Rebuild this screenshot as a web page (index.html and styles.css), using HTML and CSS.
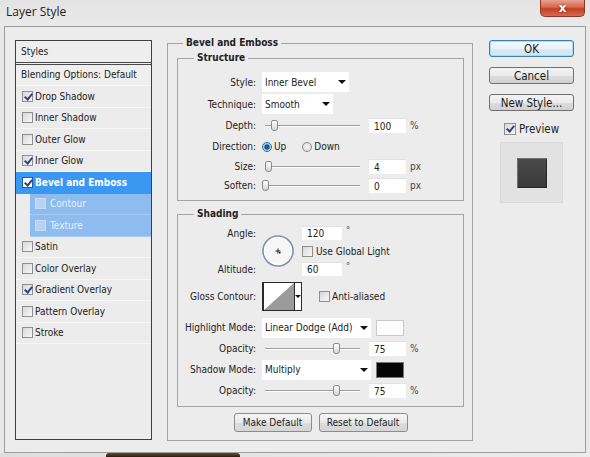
FILE: index.html
```html
<!DOCTYPE html>
<html lang="en">
  <head>
    <meta charset="UTF-8" />
    <meta name="viewport" content="width=device-width, initial-scale=1.0" />
    <title>Layer Style</title>
    <link rel="stylesheet" href="styles.css">
  </head>
  <body>
    <div class="titlebar">
      <span class="title">Layer Style</span>
      <button class="close" type="button">x</button>
    </div>

    <div class="dialog">
      <!-- effects list -->
      <div class="fx-list">
        <div class="fx-head">Styles</div>
        <div class="fx-blend">Blending Options: Default</div>
        <div class="fx"><span class="check on"></span>Drop Shadow</div>
        <div class="fx"><span class="check"></span>Inner Shadow</div>
        <div class="fx"><span class="check"></span>Outer Glow</div>
        <div class="fx"><span class="check on"></span>Inner Glow</div>
        <div class="fx sel"><span class="check on"></span>Bevel and Emboss</div>
        <div class="fx sub"><span class="check"></span>Contour</div>
        <div class="fx sub"><span class="check"></span>Texture</div>
        <div class="fx"><span class="check"></span>Satin</div>
        <div class="fx"><span class="check"></span>Color Overlay</div>
        <div class="fx"><span class="check on"></span>Gradient Overlay</div>
        <div class="fx"><span class="check"></span>Pattern Overlay</div>
        <div class="fx"><span class="check"></span>Stroke</div>
      </div>

      <!-- settings -->
      <fieldset class="group">
        <legend>Bevel and Emboss</legend>

        <fieldset class="sub structure">
          <legend>Structure</legend>
          <div class="row tall">
            <label>Style:</label>
            <div class="select w-style">Inner Bevel</div>
          </div>
          <div class="row tall">
            <label>Technique:</label>
            <div class="select w-tech">Smooth</div>
          </div>
          <div class="row">
            <label>Depth:</label>
            <span class="slider"><span class="thumb" style="left: 9px"></span></span>
            <input class="num" value="100" readonly>
            <span class="unit">%</span>
          </div>
          <div class="row">
            <label>Direction:</label>
            <span class="radio on"></span><span class="opt">Up</span>
            <span class="radio down"></span><span class="opt">Down</span>
          </div>
          <div class="row short">
            <label>Size:</label>
            <span class="slider"><span class="thumb" style="left: 3px"></span></span>
            <input class="num" value="4" readonly>
            <span class="unit">px</span>
          </div>
          <div class="row short">
            <label>Soften:</label>
            <span class="slider"><span class="thumb" style="left: 0px"></span></span>
            <input class="num" value="0" readonly>
            <span class="unit">px</span>
          </div>
        </fieldset>

        <fieldset class="sub shading">
          <legend>Shading</legend>
          <div class="angle">
            <label class="angle-lbl">Angle:</label>
            <svg class="dial" width="32" height="32" viewBox="0 0 32 32">
              <circle cx="16" cy="16" r="15" fill="#f6f6f6" stroke="#8790aa" stroke-width="1.6"/>
              <circle cx="16" cy="16" r="13.6" fill="none" stroke="#ffffff" stroke-width="1"/>
              <path d="M13.5 16h5M16 13.5v5" stroke="#222" stroke-width="1"/>
              <rect x="17" y="17" width="1.5" height="1.5" fill="#222"/>
            </svg>
            <div class="angle-val">
              <input class="num deg" value="120" readonly><span class="unit sup">°</span>
            </div>
            <div class="global"><span class="check"></span>Use Global Light</div>
            <label class="alt-lbl">Altitude:</label>
            <div class="angle-val alt-val">
              <input class="num deg" value="60" readonly><span class="unit sup">°</span>
            </div>
          </div>

          <div class="row contour-row">
            <label>Gloss Contour:</label>
            <div class="contour">
              <svg width="30" height="27" viewBox="0 0 30 27">
                <rect width="30" height="27" fill="#fff"/>
                <polygon points="0,27 30,0 30,27" fill="#9b9b9b"/>
              </svg>
              <span class="contour-arrow"></span>
            </div>
            <span class="check aa"></span><span>Anti-aliased</span>
          </div>

          <div class="row">
            <label>Highlight Mode:</label>
            <div class="select w-mode">Linear Dodge (Add)</div>
            <span class="swatch white"></span>
          </div>
          <div class="row">
            <label>Opacity:</label>
            <span class="slider"><span class="thumb" style="left: 71px"></span></span>
            <input class="num" value="75" readonly>
            <span class="unit">%</span>
          </div>
          <div class="row">
            <label>Shadow Mode:</label>
            <div class="select w-mode">Multiply</div>
            <span class="swatch black"></span>
          </div>
          <div class="row">
            <label>Opacity:</label>
            <span class="slider"><span class="thumb" style="left: 71px"></span></span>
            <input class="num" value="75" readonly>
            <span class="unit">%</span>
          </div>
        </fieldset>

        <div class="defaults">
          <button class="btn w-make" type="button">Make Default</button>
          <button class="btn w-reset" type="button">Reset to Default</button>
        </div>
      </fieldset>

      <!-- dialog buttons -->
      <div class="actions">
        <button class="big ok" type="button">OK</button>
        <button class="big" type="button">Cancel</button>
        <button class="big" type="button">New Style...</button>
        <div class="preview"><span class="check on big-check"></span>Preview</div>
        <div class="thumb-box"><span class="sample"></span></div>
      </div>
    </div>

    <div class="backdrop"><span class="blob"></span></div>
  </body>
</html>
```

FILE: styles.css
```css
* {
  box-sizing: border-box;
}
body {
  margin: 0;
  width: 590px;
  height: 457px;
  overflow: hidden;
  background-color: #e8e8e8;
  color: #222;
  font-family: "DejaVu Sans Condensed", "DejaVu Sans", sans-serif;
  font-stretch: condensed;
  font-size: 10px;
}

/* title bar */
.titlebar {
  display: flex;
  align-items: flex-start;
  height: 26px;
  background: linear-gradient(#e3e3e3, #eaeaea);
}
.title {
  padding-left: 6px;
  font-family: "Open Sans", sans-serif;
  font-stretch: normal;
  font-size: 12px;
  line-height: 24px;
  color: #1c1c1c;
}
.close {
  margin-left: auto;
  margin-right: 5px;
  width: 45px;
  height: 17px;
  padding: 0;
  border: 1px solid #8d3826;
  border-top: 0;
  border-radius: 0 0 5px 5px;
  background: linear-gradient(#e7a392, #d8674d 45%, #c53f24 55%, #d66a4e);
  color: #fff;
  font: bold 12px/14px "DejaVu Sans", sans-serif;
  text-shadow: 0 0 2px #5b1a0d;
}

.dialog {
  display: flex;
  align-items: flex-start;
  height: 427px;
  margin: 0 4px;
  padding: 10px 0 0 10px;
  border: 1px solid #9d9d9d;
  background-color: #ececec;
}

/* effects list */
.fx-list {
  width: 137px;
  height: 400px;
  margin-top: 3px;
  border: 1px solid #3f3f3f;
  background-color: #ececec;
}
.fx-head {
  height: 24px;
  padding-left: 5px;
  line-height: 21px;
  border-bottom: 3px double #4a4a4a;
  background-color: #eeeeee;
}
.fx-blend {
  height: 21px;
  padding-left: 5px;
  line-height: 20px;
  border-bottom: 1px solid #f8f8f8;
  background-color: #efefef;
}
.fx {
  display: flex;
  align-items: center;
  height: 21.5px;
  padding-left: 6px;
  border-bottom: 1px solid #f7f7f7;
}
.fx .check {
  margin-right: 2px;
}
.fx.sel {
  background-color: #3a97f2;
  color: #fff;
  font-weight: bold;
  border-bottom-color: #3a97f2;
}
.fx.sel .check {
  border-color: #1e5fa8;
  background: #fff;
}
.fx.sub {
  margin-left: 14px;
  padding-left: 5px;
  background-color: #8ebcef;
  color: #e6f0fc;
  border-bottom-color: #a7cbf3;
}
.fx.sub .check {
  margin-right: 4px;
  border-color: #c8dcf5;
  background: #b7d2f3;
}

/* checkbox */
.check {
  position: relative;
  flex: none;
  display: inline-block;
  width: 11px;
  height: 11px;
  border: 1px solid #8f8f8f;
  background: linear-gradient(135deg, #d9d9d9, #f7f7f7);
}
.check.on::after {
  content: "";
  position: absolute;
  left: 3px;
  top: 0;
  width: 3px;
  height: 6px;
  border: solid #2d428a;
  border-width: 0 2px 2px 0;
  transform: rotate(40deg);
}

/* group boxes */
fieldset {
  margin: 0;
  min-width: 0;
  border: 1px solid #a4a4a4;
}
legend {
  padding: 0 3px;
  font-weight: bold;
  line-height: 12px;
}
.group {
  width: 306px;
  margin-left: 15px;
  padding: 3px 8px 8px 9px;
}
.group > legend {
  margin-left: 6px;
}
.sub {
  padding: 0;
}
.sub > legend {
  margin-left: 16px;
}
.structure {
  padding: 7px 0 5px;
}
.shading {
  margin-top: 7px;
  padding: 6px 0 5px;
}

.row {
  display: flex;
  align-items: center;
  height: 21px;
}
.row.tall {
  height: 22px;
}
.row.short {
  height: 19px;
}
.row > label {
  flex: none;
  width: 84px;
  padding-right: 6px;
  text-align: right;
}

.select {
  display: flex;
  align-items: center;
  justify-content: space-between;
  height: 20px;
  padding: 0 3px 0 3px;
  background-color: #fff;
}
.select::after {
  content: "";
  border-left: 4px solid transparent;
  border-right: 4px solid transparent;
  border-top: 4px solid #111;
}
.w-style { width: 87px; }
.w-tech { width: 71px; }
.w-mode { width: 109px; }

.slider {
  position: relative;
  flex: none;
  width: 100px;
  height: 11px;
}
.slider::before {
  content: "";
  position: absolute;
  left: 3px;
  right: 2px;
  top: 5px;
  height: 1px;
  background-color: #9d9d9d;
  box-shadow: 0 1px 0 #fff;
}
.thumb {
  position: absolute;
  top: 0;
  width: 7px;
  height: 11px;
  border: 1px solid #8a8a8a;
  border-radius: 2px 2px 3px 3px;
  background: linear-gradient(#ffffff, #d6d6d6);
}

.num {
  width: 37px;
  height: 15px;
  margin-left: 7px;
  padding: 0 0 0 5px;
  border: 0;
  border-top: 1px solid #e2e2e2;
  background-color: #fff;
  color: #222;
  font: inherit;
  outline: none;
}
.unit {
  margin-left: 4px;
  color: #444;
}

.radio {
  flex: none;
  width: 10px;
  height: 10px;
  border-radius: 50%;
  border: 1px solid #8d8d8d;
  background: radial-gradient(circle, #f4f4f4, #d4d4d4);
}
.radio.on {
  border-color: #2d6a94;
  background: radial-gradient(circle, #1d5c86 0 2.3px, #8fc0e2 3px, #e4f1fa 4.5px);
}
.radio.down {
  margin-left: 16px;
}
.opt {
  margin-left: 2px;
}

/* angle + altitude */
.angle {
  display: grid;
  grid-template-columns: 84px 40px auto;
  grid-template-rows: 14px 22px 14px;
  align-items: center;
}
.angle-lbl,
.alt-lbl {
  grid-column: 1;
  padding-right: 6px;
  text-align: right;
}
.angle-lbl {
  grid-row: 1;
}
.alt-lbl {
  grid-row: 3;
}
.dial {
  grid-column: 2;
  grid-row: 1 / 4;
  align-self: center;
}
.angle-val {
  grid-column: 3;
  grid-row: 1;
  display: flex;
  align-items: flex-start;
  height: 14px;
}
.angle-val.alt-val {
  grid-row: 3;
}
.num.deg {
  width: 40px;
  height: 14px;
  margin-left: 0;
}
.sup {
  font-size: 9px;
  line-height: 9px;
}
.global {
  grid-column: 3;
  grid-row: 2;
  display: flex;
  align-items: center;
}
.global .check {
  margin-right: 3px;
}

.row.contour-row {
  height: 29px;
  margin: 6px 0;
}
.contour {
  display: flex;
  height: 29px;
  border: 1px solid #2a2a2a;
  border-left-width: 2px;
  background-color: #fff;
}
.contour-arrow {
  display: flex;
  align-items: center;
  justify-content: center;
  width: 7px;
  border-left: 1px solid #2a2a2a;
}
.contour-arrow::after {
  content: "";
  border-left: 3px solid transparent;
  border-right: 3px solid transparent;
  border-top: 3px solid #111;
}
.check.aa {
  margin-left: 17px;
  margin-right: 2px;
}

.swatch {
  width: 28px;
  height: 16px;
  margin-left: 5px;
  border: 1px solid #c9c9c9;
}
.swatch.white { background-color: #fdfdfd; }
.swatch.black { background-color: #050505; border-color: #777; }

.defaults {
  display: flex;
  justify-content: center;
  gap: 7px;
  margin-top: 6px;
}
.btn {
  height: 19px;
  padding: 0;
  border: 1px solid #8b8b8b;
  border-radius: 3px;
  background: linear-gradient(#f7f7f7, #e8e8e8 50%, #dcdcdc 51%, #d6d6d6);
  color: #1e1e1e;
  font: inherit;
}
.w-make { width: 78px; }
.w-reset { width: 89px; }

/* right column */
.actions {
  display: flex;
  flex-direction: column;
  align-items: center;
  gap: 10px;
  width: 85px;
  margin-left: 16px;
  padding-top: 3px;
  font-size: 11.5px;
}
.big {
  width: 85px;
  height: 17px;
  padding: 0;
  border: 1px solid #707070;
  border-radius: 3px;
  background: linear-gradient(#f3f3f3, #ebebeb 50%, #dddddd 51%, #d1d1d1);
  color: #1a1a1a;
  font: inherit;
  line-height: 14px;
}
.big.ok {
  border-color: #3c7fb1;
  box-shadow: inset 0 0 0 1px #a6dcf7;
  background: linear-gradient(#f4f9fc, #e9f3f9 50%, #d9ebf5 51%, #cfe5f1);
}
.preview {
  display: flex;
  align-items: center;
  height: 17px;
  margin-top: -1px;
}
.big-check {
  width: 12px;
  height: 12px;
  margin-right: 3px;
}
.thumb-box {
  display: flex;
  align-items: center;
  justify-content: center;
  width: 63px;
  height: 61px;
  margin-top: -5px;
  border: 1px solid #dadada;
  background-color: #e2e2e2;
}
.sample {
  width: 30px;
  height: 30px;
  background: linear-gradient(#4b4b4b, #383838);
  box-shadow: inset 1px 1px 0 #707070, inset -1px -1px 0 #262626;
}

/* what lies below the window */
.backdrop {
  height: 4px;
  padding-left: 106px;
  background: linear-gradient(90deg, #dedede, #ececec);
}
.blob {
  display: block;
  width: 134px;
  height: 4px;
  border-radius: 3px 3px 0 0;
  background: linear-gradient(#6a4c2e, #2b1b0c);
}
```
